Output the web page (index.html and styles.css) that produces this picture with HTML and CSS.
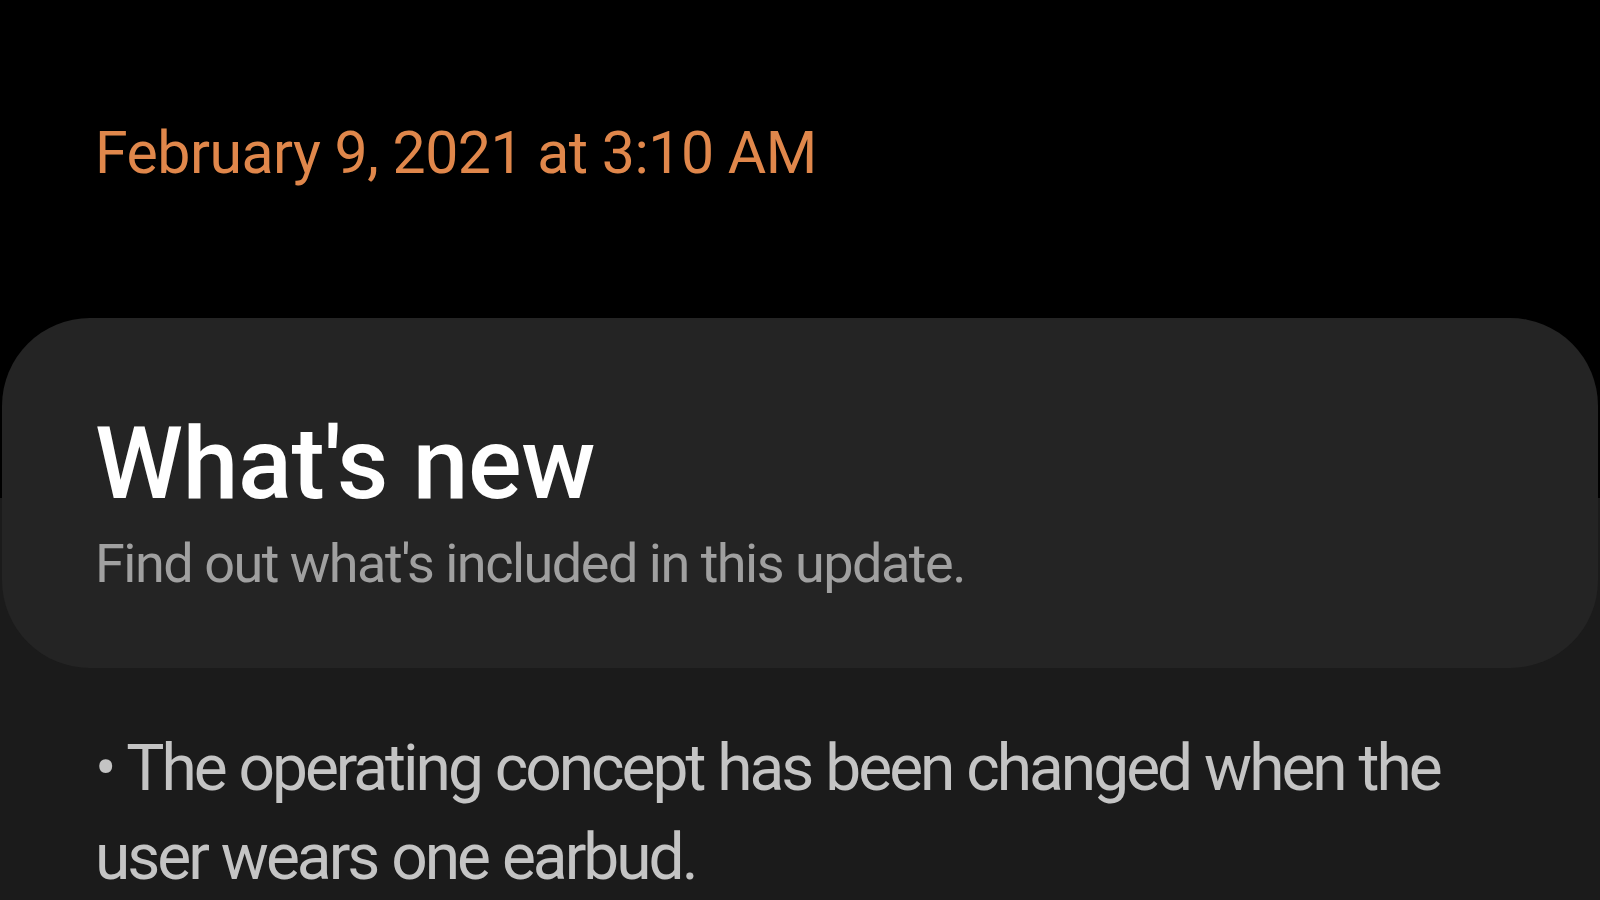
FILE: index.html
```html
<!doctype html>
<html lang="en">
	<head>
		<meta charset="UTF-8">
		<title>Software update</title>
		<link rel="stylesheet" href="styles.css">
	</head>
	<body>
		<div class="top">
			<p class="date">February 9, 2021 at 3:10 AM</p>
		</div>
		<div class="sheet">
			<div class="card">
				<h1 class="card-title">What's new</h1>
				<p class="card-sub">Find out what's included in this update.</p>
			</div>
			<p class="note">&bull; The operating concept has been changed when the user wears one earbud.</p>
		</div>
	</body>
</html>
```
FILE: styles.css
```css
* {
	box-sizing: border-box;
}
html, body {
	margin: 0;
	height: 100%;
	overflow: hidden;
}
body {
	background-color: #000;
	font-family: Roboto, "Noto Sans", sans-serif;
}
.top {
	padding: 123px 0 0 95px;
	height: 318px;
}
.date {
	margin: 0;
	font-size: 59px;
	line-height: 59px;
	letter-spacing: -0.5px;
	color: #e0874b;
}
.sheet {
	background: linear-gradient(to bottom, #000 0, #000 180px, #1b1b1b 180px);
	min-height: 582px;
}
.card {
	margin: 0 2px;
	height: 350px;
	padding: 96px 0 0 93px;
	background-color: #242424;
	border-radius: 88px;
}
.card-title {
	margin: 0;
	font-size: 100px;
	line-height: 100px;
	font-weight: 500;
	letter-spacing: -0.3px;
	color: #fff;
}
.card-sub {
	margin: 23px 0 0;
	font-size: 54px;
	line-height: 54px;
	letter-spacing: -1.5px;
	color: #a0a0a0;
}
.note {
	margin: 56px 0 0;
	padding-left: 95px;
	width: 1500px;
	font-size: 64px;
	line-height: 89px;
	letter-spacing: -3px;
	word-spacing: 1px;
	color: #c4c4c4;
}
```
